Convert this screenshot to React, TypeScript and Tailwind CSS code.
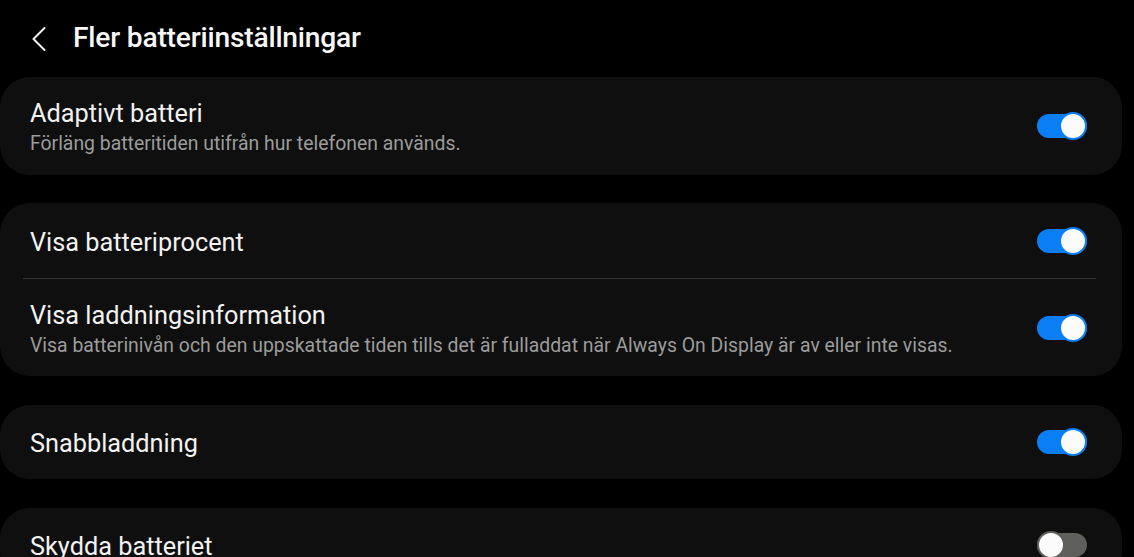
import React from "react";

function Toggle({ on }: { on: boolean }) {
  return (
    <div className="relative w-[50px] h-[28px] shrink-0">
      <div
        className={
          "absolute left-0 right-0 top-[2px] h-[24px] rounded-full " +
          (on ? "bg-[#0a7ff5]" : "bg-[#5f5f5c]")
        }
      />
      <div
        className={
          "absolute top-0 w-[28px] h-[28px] rounded-full bg-[#fbfbfb] border-2 " +
          (on ? "right-0 border-[#0a7ff5]" : "left-0 border-[#5f5f5c]")
        }
      />
    </div>
  );
}

function Row({
  title,
  sub,
  on,
  h,
}: {
  title: string;
  sub?: string;
  on: boolean;
  h: string;
}) {
  return (
    <div className={"flex items-center pl-[30px] pr-[35px] " + h}>
      <div className="flex-1 flex flex-col translate-y-[2px]">
        <div className="text-[25.3px] leading-[30px] text-[#f2f2f2]">{title}</div>
        {sub && (
          <div className="text-[19.4px] leading-[26px] text-[#9c9c9c] mt-[2px]">{sub}</div>
        )}
      </div>
      <Toggle on={on} />
    </div>
  );
}

export default function App() {
  return (
    <div
      className="w-[1134px] h-[557px] overflow-hidden bg-black"
      style={{ fontFamily: "Roboto, 'Noto Sans', sans-serif" }}
    >
      <div className="h-[77px] flex items-center">
        <svg width="14" height="24" viewBox="0 0 14 24" className="ml-[32px] mt-[1px]">
          <path d="M12.5 1 L1.5 12 L12.5 23" fill="none" stroke="#f2f2f2" strokeWidth="2" strokeLinecap="round" strokeLinejoin="round" />
        </svg>
        <div className="ml-[27px] text-[28.2px] font-medium text-[#f7f7f7] tracking-[-0.2px]">
          Fler batteriinställningar
        </div>
      </div>
      <div className="flex flex-col pr-[12px]">
        <div className="bg-[#0f0f0f] rounded-[30px]">
          <Row h="h-[98px]" title="Adaptivt batteri" sub="Förläng batteritiden utifrån hur telefonen används." on />
        </div>
        <div className="bg-[#0f0f0f] rounded-[30px] flex flex-col mt-[28px]">
          <Row h="h-[75px]" title="Visa batteriprocent" on />
          <div className="ml-[23px] mr-[26px] h-[1px] bg-[#353535]" />
          <Row
            h="h-[97px]"
            title="Visa laddningsinformation"
            sub="Visa batterinivån och den uppskattade tiden tills det är fulladdat när Always On Display är av eller inte visas."
            on
          />
        </div>
        <div className="bg-[#0f0f0f] rounded-[30px] mt-[29px]">
          <Row h="h-[74px]" title="Snabbladdning" on />
        </div>
        <div className="bg-[#0f0f0f] rounded-[30px] mt-[29px]">
          <Row h="h-[74px]" title="Skydda batteriet" on={false} />
        </div>
      </div>
    </div>
  );
}
